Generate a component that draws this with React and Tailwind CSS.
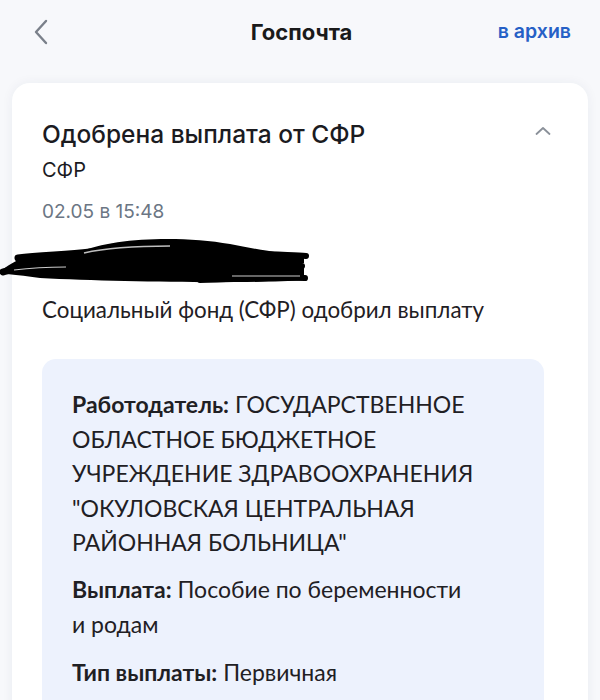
import React from 'react'

const Scribble = () => (
  <svg width="312" height="50" viewBox="0 0 312 50" className="-ml-[42px] block">
    <path
      d="M2 34 C 10 28, 20 22, 30 20 C 50 18, 70 19, 80 16 C 110 2, 180 -1, 230 8 C 255 13, 285 18, 304 20 L 304 27 L 294 29 L 304 32 L 304 44 C 250 48, 120 46, 40 42 C 25 40, 10 38, 2 38 Z"
      fill="#000"
    />
    <path d="M3 36 C 16 31, 36 30, 66 30" stroke="#000" strokeWidth="7" fill="none" strokeLinecap="round" />
    <path d="M18 22 C 40 19, 64 19, 90 16" stroke="#000" strokeWidth="7" fill="none" strokeLinecap="round" />
    <path d="M250 17 C 275 19, 295 19, 306 20" stroke="#000" strokeWidth="6" fill="none" strokeLinecap="round" />
    <path d="M262 30 C 282 30, 296 30, 302 30" stroke="#000" strokeWidth="6" fill="none" strokeLinecap="round" />
    <path d="M200 44 C 240 43, 282 41, 305 42" stroke="#000" strokeWidth="6" fill="none" strokeLinecap="round" />
    <path d="M84 17 C 110 11, 140 10, 170 10" stroke="#fff" strokeWidth="1.5" fill="none" opacity="0.75" />
    <path d="M14 34 C 30 32, 48 31, 66 31" stroke="#fff" strokeWidth="1.2" fill="none" opacity="0.8" />
    <path d="M232 40 C 260 40, 285 40, 300 40" stroke="#fff" strokeWidth="1.2" fill="none" opacity="0.8" />
  </svg>
)

const Field = ({ label, children }) => (
  <p className="leading-[34.5px]">
    <span className="font-bold">{label}</span> {children}
  </p>
)

export default function App() {
  return (
    <div className="w-[600px] h-[700px] overflow-hidden bg-[#f7f8fb] font-['Inter',sans-serif] text-[#1b1b1f]">
      {/* Header */}
      <div className="grid h-[64px] grid-cols-[1fr_auto_1fr] items-center pl-[32px] pr-[29px]">
        <svg width="20" height="26" viewBox="0 0 20 26" fill="none">
          <path d="M14 2 L4 13 L14 24" stroke="#7a808a" strokeWidth="2.4" strokeLinecap="round" strokeLinejoin="round" />
        </svg>
        <h1 className="text-[22px] font-bold text-[#1a1a1a]">Госпочта</h1>
        <span className="justify-self-end text-[19.5px] font-semibold text-[#2660c6]">в архив</span>
      </div>

      {/* Card */}
      <div className="mx-[12px] mt-[19px] rounded-[18px] bg-white pl-[30px] pr-[37px] pt-[35px] shadow-[0_0_12px_rgba(30,50,90,0.06)]">
        <div className="flex items-start justify-between">
          <h2 className="text-[24.5px] font-medium leading-[32px]">Одобрена выплата от СФР</h2>
          <svg width="16" height="10" viewBox="0 0 16 10" fill="none" className="mt-[8px]">
            <path d="M1.5 8 L8 2 L14.5 8" stroke="#8a9099" strokeWidth="1.8" strokeLinecap="round" strokeLinejoin="round" />
          </svg>
        </div>
        <p className="mt-[8px] text-[20px] leading-[24px]">СФР</p>
        <p className="mt-[18px] text-[19px] leading-[24px] text-[#6b7684]">02.05 в 15:48</p>
        <div className="mt-[12px]">
          <Scribble />
        </div>
        <p className="mt-[10px] font-['Lato',sans-serif] text-[22.4px] leading-[28px] text-[#1f2024]">
          Социальный фонд (СФР) одобрил выплату
        </p>

        {/* Details */}
        <div className="mr-[7px] mt-[35px] rounded-[14px] bg-[#edf2fd] pl-[30px] pr-[50px] pt-[28px] pb-[40px] font-['Lato',sans-serif] text-[23px] text-[#1f2024]">
          <Field label="Работодатель:">
            ГОСУДАРСТВЕННОЕ ОБЛАСТНОЕ БЮДЖЕТНОЕ УЧРЕЖДЕНИЕ ЗДРАВООХРАНЕНИЯ "ОКУЛОВСКАЯ ЦЕНТРАЛЬНАЯ РАЙОННАЯ БОЛЬНИЦА"
          </Field>
          <div className="mt-[12.5px]">
            <Field label="Выплата:">Пособие по беременности и&nbsp;родам</Field>
          </div>
          <div className="mt-[13.5px]">
            <Field label="Тип выплаты:">Первичная</Field>
          </div>
        </div>
      </div>
    </div>
  )
}
